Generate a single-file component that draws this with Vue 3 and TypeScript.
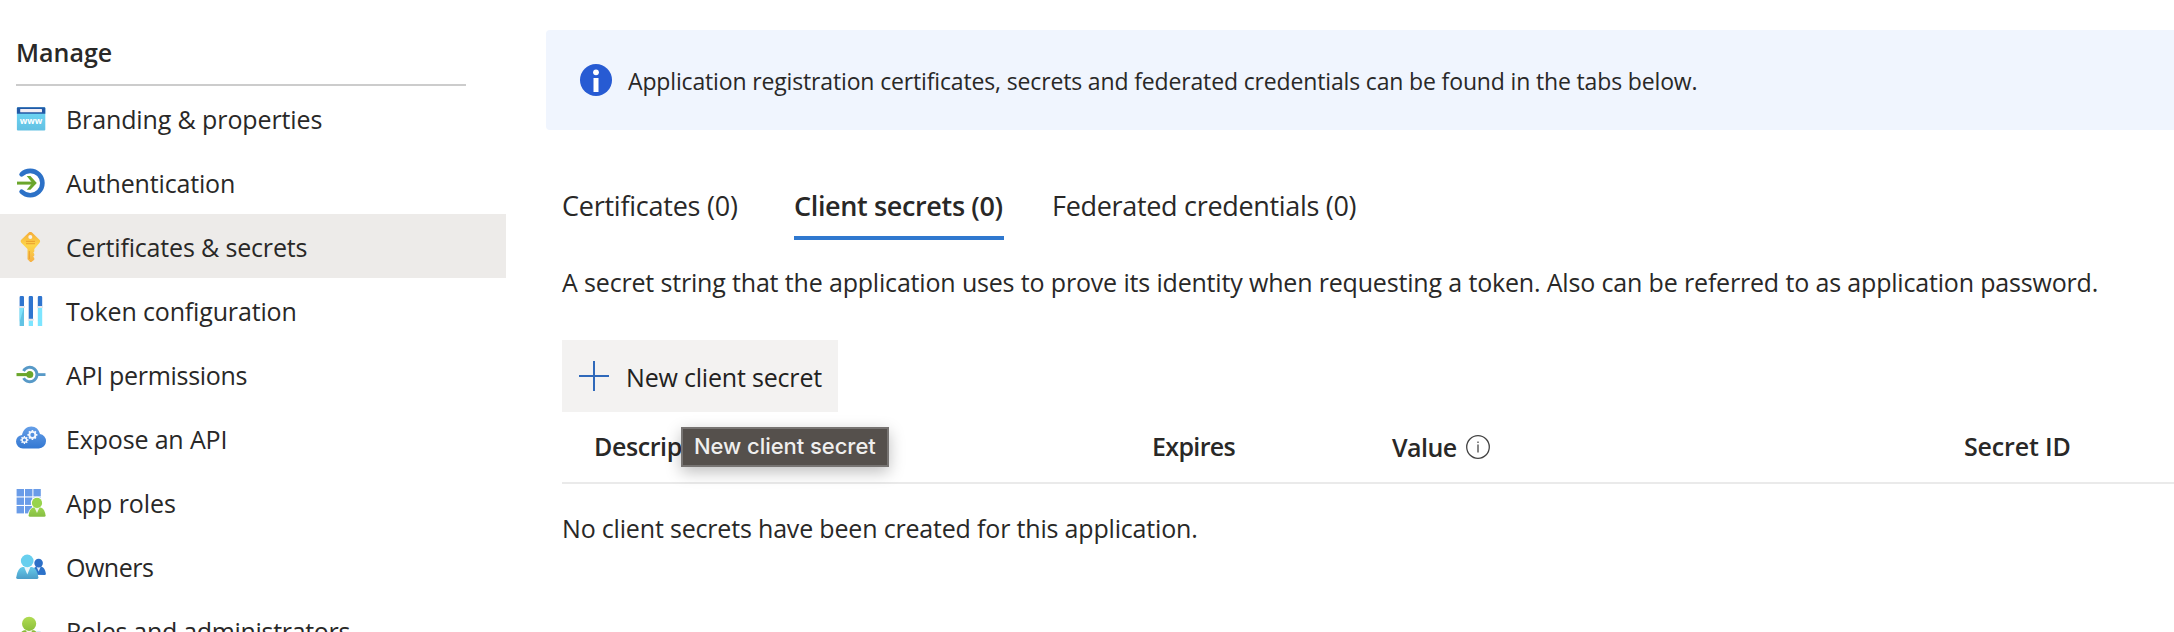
<script setup lang="ts">
interface NavItem {
  id: string
  label: string
  tracking: number
}

const navItems: NavItem[] = [
  { id: 'branding', label: 'Branding & properties', tracking: -0.11 },
  { id: 'auth', label: 'Authentication', tracking: -0.162 },
  { id: 'certs', label: 'Certificates & secrets', tracking: -0.165 },
  { id: 'token', label: 'Token configuration', tracking: -0.147 },
  { id: 'api', label: 'API permissions', tracking: -0.31 },
  { id: 'expose', label: 'Expose an API', tracking: -0.16 },
  { id: 'roles', label: 'App roles', tracking: -0.062 },
  { id: 'owners', label: 'Owners', tracking: -0.5 },
  { id: 'admins', label: 'Roles and administrators', tracking: -0.31 },
]
const activeId = 'certs'

const gearTeeth = [0, 45, 90, 135]
const gridCells = [0, 1, 2, 3, 4, 5, 6, 7, 8].map((i) => ({
  x: 0.6 + (i % 3) * 8.4,
  y: 1 + Math.floor(i / 3) * 8.5,
}))
</script>

<template>
  <div class="page">
    <nav class="sidebar">
      <h2 class="nav-title">Manage</h2>
      <ul class="nav-list">
        <li
          v-for="item in navItems"
          :key="item.id"
          class="nav-item"
          :class="{ active: item.id === activeId }"
        >
          <svg class="nav-icon" viewBox="0 0 30 30">
            <g v-if="item.id === 'branding'">
              <defs>
                <linearGradient id="gBrand" x1="0" y1="0" x2="0" y2="1">
                  <stop offset="0" stop-color="#6fdaf8" />
                  <stop offset="1" stop-color="#62c0e2" />
                </linearGradient>
              </defs>
              <rect x="0.9" y="3.3" width="28.4" height="23.2" rx="1" fill="url(#gBrand)" />
              <path d="M0.9 9.8V4.3a1 1 0 0 1 1-1h26.4a1 1 0 0 1 1 1v5.5z" fill="#2259a6" />
              <rect x="4.2" y="5" width="21.8" height="3.2" rx="0.5" fill="#f1eef5" />
              <text x="15" y="20.3" text-anchor="middle" class="www" textLength="22.5" lengthAdjust="spacingAndGlyphs">www</text>
            </g>
            <g v-else-if="item.id === 'auth'" fill="none">
              <path d="M5.6 6.4A12.2 12.2 0 1 1 5.6 23.7" stroke="#2c71c7" stroke-width="4.6" stroke-linecap="round" />
              <path d="M1 15.1H18.5" stroke="#6ba62c" stroke-width="3" />
              <path d="M10.7 7.9H14.4L20.8 15.1L14.4 21.8H10.7L16.4 15.1z" fill="#6ba62c" />
            </g>
            <g v-else-if="item.id === 'certs'">
              <defs>
                <linearGradient id="gKey" x1="0" y1="0" x2="0" y2="1">
                  <stop offset="0" stop-color="#f5ab38" />
                  <stop offset="0.45" stop-color="#fdd649" />
                  <stop offset="1" stop-color="#f6b044" />
                </linearGradient>
              </defs>
              <path
                d="M12.8 0.5a2.4 2.4 0 0 1 3.2 0L23.2 7.6a2.4 2.4 0 0 1 0.2 3.4L18.3 17v2.4l-1 1.2l1 1.4v1.5l-1.1 1.3l1.1 1.3v1.6l-2.9 2.3h-1.2L11.5 27.3V17L5.5 11a2.4 2.4 0 0 1 0-3.4z"
                fill="url(#gKey)"
              />
              <circle cx="14.3" cy="4.9" r="2" fill="#f5f2ec" />
              <path d="M10 9.4H19M10 11.7H19M13.3 19V27" stroke="#e89a2c" stroke-width="0.9" />
            </g>
            <g v-else-if="item.id === 'token'">
              <path d="M3.6 11H8V30H3.6z" fill="#62c3e4" />
              <path d="M3.6 11H8L3.6 26z" fill="#7fe2fa" />
              <path d="M12.7 23H17V30H12.7zM21.8 11H26.2V30H21.8z" fill="#7de5ff" />
              <path d="M3.6 10.4V1.2Q3.6 0 4.8 0H6.8Q8 0 8 1.2V10.4zM12.7 23.5V1.2Q12.7 0 13.9 0H15.8Q17 0 17 1.2V23.5zM21.8 10.4V1.2Q21.8 0 23 0H25Q26.2 0 26.2 1.2V10.4z" fill="#2f75cf" />
              <path d="M2.8 11H8.8M11.9 23.8H17.8M21 11H27" stroke="#e3e6ec" stroke-width="2" />
            </g>
            <g v-else-if="item.id === 'api'" fill="none">
              <path d="M7.5 10.9A7.2 7.2 0 1 1 7.5 18.1" stroke="#5799c7" stroke-width="2.9" />
              <path d="M21.5 14.6H29.5" stroke="#5799c7" stroke-width="2.8" />
              <path d="M0.5 14.6H13" stroke="#6ba62c" stroke-width="3.1" />
              <circle cx="13.8" cy="14.6" r="3.5" fill="#6ba62c" />
            </g>
            <g v-else-if="item.id === 'expose'">
              <defs>
                <linearGradient id="gCloud" x1="0" y1="0" x2="0" y2="1">
                  <stop offset="0" stop-color="#659fe8" />
                  <stop offset="1" stop-color="#3478d2" />
                </linearGradient>
              </defs>
              <path
                d="M7 24.4A6.9 6.9 0 0 1 0 17.6A6.8 6.8 0 0 1 6 10.9C7 5.7 10.8 2.4 15.3 2.4C19.8 2.4 23 5.4 24 9.9A7.2 7.2 0 0 1 30 17.2A7.2 7.2 0 0 1 22.8 24.4z"
                fill="url(#gCloud)"
              />
              <g fill="none" stroke="#f3f7fd">
                <circle cx="16.4" cy="10.9" r="3" stroke-width="1.9" />
                <circle cx="8.4" cy="16" r="2.3" stroke-width="1.5" />
                <g v-for="a in gearTeeth" :key="a" stroke-width="1.6">
                  <path d="M16.4 5.9V7.6M16.4 14.2V15.9" :transform="`rotate(${a} 16.4 10.9)`" />
                  <path d="M8.4 12V13.4M8.4 18.6V20" stroke-width="1.3" :transform="`rotate(${a} 8.4 16)`" />
                </g>
              </g>
            </g>
            <g v-else-if="item.id === 'roles'">
              <defs>
                <linearGradient id="gRole" x1="0" y1="0" x2="0" y2="1">
                  <stop offset="0" stop-color="#9bd54f" />
                  <stop offset="1" stop-color="#86bd42" />
                </linearGradient>
              </defs>
              <rect v-for="(c, i) in gridCells" :key="i" :x="c.x" :y="c.y" width="7.4" height="7.4" fill="#6a9ce8" />
              <circle cx="21" cy="14.9" r="6.2" fill="#fff" />
              <path d="M11.5 29.6Q12 20 18 18.8H24Q29 20 30 29.6z" fill="#fff" />
              <path d="M12.6 27.4Q13.6 20.2 17.4 19.6H24.6Q28.4 20.2 29.6 27.4Q29.6 28.8 28.2 28.8H14Q12.6 28.8 12.6 27.4z" fill="url(#gRole)" />
              <path d="M18.4 19.4H23.6L21 25z" fill="#eef6e2" />
              <circle cx="21" cy="14.9" r="5.1" fill="#98d44d" />
            </g>
            <g v-else-if="item.id === 'owners'">
              <defs>
                <linearGradient id="gOwner" x1="0" y1="0" x2="0" y2="1">
                  <stop offset="0" stop-color="#66cbea" />
                  <stop offset="1" stop-color="#4a9cc8" />
                </linearGradient>
              </defs>
              <path d="M16 22.8Q17 15.4 20 14.8H25.6Q29 15.8 29.9 21.8Q29.9 23 28.7 23z" fill="#2c72c9" />
              <path d="M20.4 14.6H24.8L22.7 19.6z" fill="#dde9f7" />
              <circle cx="22.6" cy="11.1" r="4.3" fill="#2c6fc7" />
              <path d="M0.2 25.4Q1.5 16.2 6.4 15H16Q21.2 16.2 22.4 25.4Q22.4 27 20.8 27H1.8Q0.2 27 0.2 25.4z" fill="url(#gOwner)" />
              <path d="M8 14.8H14.6L11.3 22.4z" fill="#edf7fb" />
              <circle cx="11.2" cy="8.9" r="6.3" fill="#68cfee" />
            </g>
            <g v-else>
              <defs>
                <linearGradient id="gAdmin" x1="0" y1="0" x2="0" y2="1">
                  <stop offset="0" stop-color="#b0dc52" />
                  <stop offset="1" stop-color="#8cbf3c" />
                </linearGradient>
              </defs>
              <path d="M2 26Q3 15.8 8 14.2H18Q23 15.8 24 26z" fill="#8abb38" />
              <path d="M9.6 13.6H16.6L13.1 21z" fill="#f3f8e8" />
              <path d="M19.4 16Q22 13.8 24.8 15.2V18H19.4z" fill="#d4eef8" />
              <circle cx="13.1" cy="7.8" r="7.1" fill="url(#gAdmin)" />
            </g>
          </svg>
          <span :style="{ letterSpacing: item.tracking + 'px' }">{{ item.label }}</span>
        </li>
      </ul>
    </nav>

    <main class="content">
      <div class="banner">
        <svg class="banner-icon" viewBox="0 0 32 32">
          <circle cx="16" cy="16" r="16" fill="#275bd3" />
          <circle cx="16" cy="8.3" r="2.9" fill="#fff" />
          <rect x="13.5" y="14" width="5" height="14" fill="#fff" />
        </svg>
        <span>Application registration certificates, secrets and federated credentials can be found in the tabs below.</span>
      </div>

      <div class="body">
        <div class="tabs">
          <div class="tab first">Certificates (0)</div>
          <div class="tab selected">Client secrets (0)</div>
          <div class="tab last">Federated credentials (0)</div>
        </div>
        <p class="text intro">
          A secret string that the application uses to prove its identity when requesting a token. Also can be referred to as application password.
        </p>
        <div class="action">
          <button class="new-secret" type="button">
            <svg class="plus" viewBox="0 0 30 30">
              <path d="M15 0V30M0 15H30" stroke="#2f69ba" stroke-width="2" />
            </svg>
            <span>New client secret</span>
          </button>
          <div class="tooltip">New client secret</div>
        </div>
        <div class="table-head">
          <span class="th-desc">Description</span>
          <span class="th-exp">Expires</span>
          <span class="th-value">
            <span class="th-value-label">Value</span>
            <svg class="info" viewBox="0 0 24 24">
              <circle cx="12" cy="12" r="11.3" fill="none" stroke="#444" stroke-width="1.3" />
              <path d="M12 9.6V17.4M12 6.4V8" stroke="#555" stroke-width="1.4" />
            </svg>
          </span>
          <span class="th-id">Secret ID</span>
        </div>
        <p class="text empty">No client secrets have been created for this application.</p>
      </div>
    </main>
  </div>
</template>

<style>
body {
  margin: 0;
  background: #fff;
}
</style>

<style scoped>
.page {
  display: flex;
  width: 2174px;
  height: 632px;
  overflow: hidden;
  background: #fff;
  color: #292827;
  font-family: 'Open Sans', 'Noto Sans', sans-serif;
  font-size: 25px;
  white-space: nowrap;
}
.sidebar {
  width: 506px;
  flex: none;
}
.nav-title {
  margin: 0 40px 0 16px;
  padding-top: 20px;
  height: 64px;
  line-height: 65px;
  border-bottom: 2px solid #ccc;
  font-size: 25px;
  font-weight: 650;
}
.nav-list {
  list-style: none;
  margin: 0;
  padding: 0;
}
.nav-item {
  display: flex;
  align-items: center;
  height: 64px;
  padding-left: 16px;
  line-height: 62px;
}
.nav-item:first-child {
  padding-top: 0;
}
.nav-item.active {
  background: #edebe9;
}
.nav-icon {
  width: 30px;
  height: 30px;
  margin: 2px 20px 0 0;
  flex: none;
}
.nav-item span {
  padding-top: 2px;
}
.www {
  font: 700 9px 'Open Sans', sans-serif;
  fill: #fff;
}
.content {
  flex: 1;
  margin-left: 40px;
  padding-top: 30px;
  min-width: 0;
}
.banner {
  display: flex;
  align-items: center;
  box-sizing: border-box;
  height: 100px;
  padding-left: 34px;
  background: #f0f5fe;
  border-radius: 4px 0 0 4px;
  font-size: 23px;
  letter-spacing: -0.15px;
}
.banner-icon {
  width: 32px;
  height: 32px;
  margin-right: 16px;
}
.banner span {
  line-height: 60px;
  padding-top: 2px;
}
.body {
  padding-left: 16px;
}
.tabs {
  display: flex;
  gap: 50px;
  padding-top: 46px;
  font-size: 27px;
}
.tab {
  height: 60px;
  line-height: 60px;
  border-bottom: 4px solid transparent;
}
.first {
  letter-spacing: -0.24px;
  width: 182px;
}
.selected {
  width: 210px;
  font-weight: 650;
  letter-spacing: -0.36px;
  border-color: #2f78cf;
}
.last {
  letter-spacing: -0.31px;
  margin-left: -2px;
}
.text {
  margin: 0;
  line-height: 60px;
}
.intro {
  padding-top: 12px;
  letter-spacing: -0.19px;
  word-spacing: 0.15px;
}
.action {
  position: relative;
  padding-top: 28px;
}
.new-secret {
  display: flex;
  align-items: center;
  width: 276px;
  height: 72px;
  padding: 0 0 0 17px;
  border: 0;
  background: #f3f2f1;
  color: #222120;
  font: inherit;
  letter-spacing: -0.19px;
}
.plus {
  width: 30px;
  height: 30px;
  margin-right: 17px;
}
.new-secret span {
  padding-top: 1px;
}
.tooltip {
  position: absolute;
  left: 119px;
  top: 115px;
  width: 208px;
  height: 40px;
  box-sizing: border-box;
  border: 2px solid #777472;
  background: #55504c;
  color: #f0efee;
  box-shadow: 0 5px 16px rgba(0, 0, 0, 0.26);
  font: 500 22px/34px Inter, sans-serif;
  letter-spacing: -0.05px;
  padding-left: 11px;
}
.table-head {
  display: grid;
  grid-template-columns: 558px 240px 572px 1fr;
  align-items: center;
  height: 70px;
  line-height: 68px;
  padding-left: 32px;
  border-bottom: 2px solid #eaeaea;
  font-weight: 650;
}
.table-head > span {
  height: 70px;
}
.th-desc {
  letter-spacing: -0.4px;
}
.th-exp {
  letter-spacing: -0.65px;
}
.th-value {
  display: flex;
  align-items: center;
  gap: 9px;
}
.th-value-label {
  letter-spacing: -0.55px;
}
.th-id {
  letter-spacing: -0.15px;
}
.info {
  width: 24px;
  height: 24px;
}
.empty {
  padding-top: 14px;
  letter-spacing: -0.18px;
}
</style>
